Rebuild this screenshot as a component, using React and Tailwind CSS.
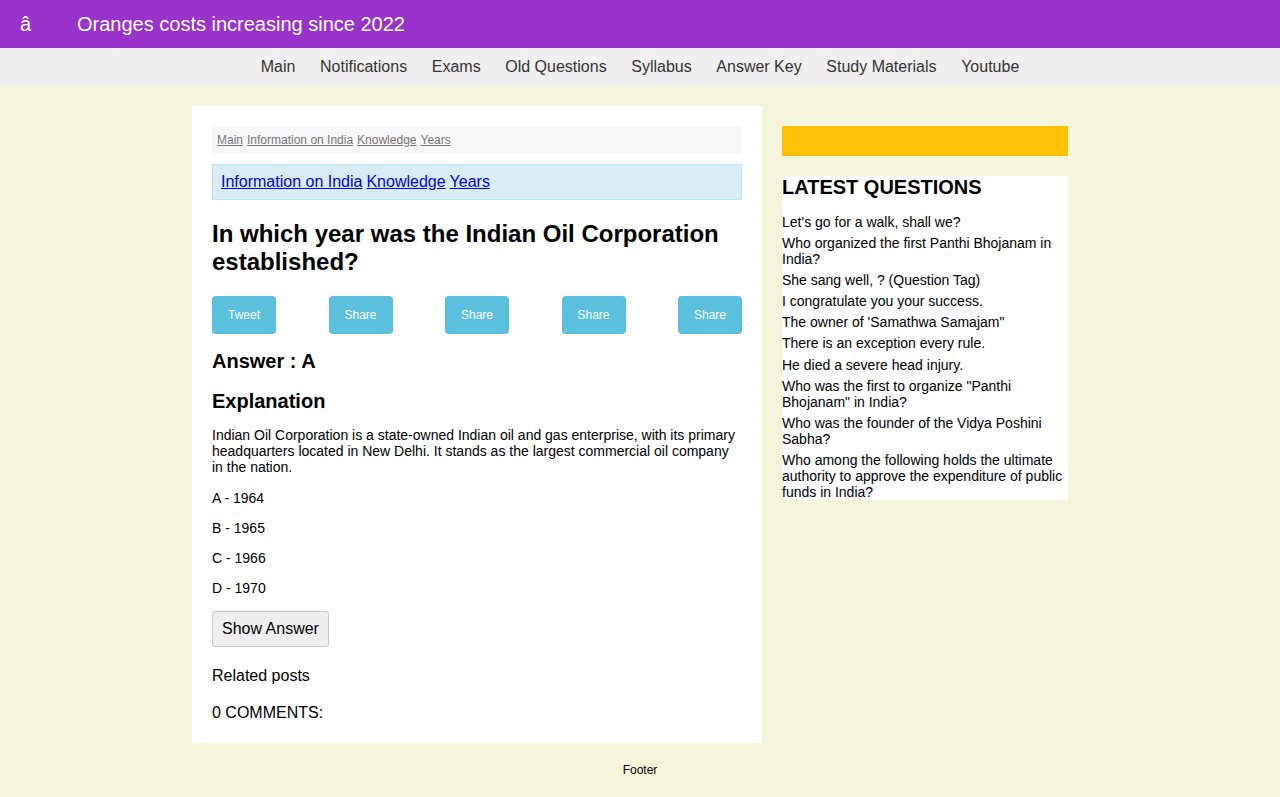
import React from "react";

const navItems = ["Main", "Notifications", "Exams", "Old Questions", "Syllabus", "Answer Key", "Study Materials", "Youtube"];
const latest = [
  "Let's go for a walk, shall we?",
  "Who organized the first Panthi Bhojanam in India?",
  "She sang well, ? (Question Tag)",
  "I congratulate you your success.",
  "The owner of 'Samathwa Samajam\"",
  "There is an exception every rule.",
  "He died a severe head injury.",
  "Who was the first to organize \"Panthi Bhojanam\" in India?",
  "Who was the founder of the Vidya Poshini Sabha?",
  "Who among the following holds the ultimate authority to approve the expenditure of public funds in India?",
];

export default function App() {
  return (
    <div className="min-h-[797px] bg-[#f5f5dc] text-black" style={{ fontFamily: '"Liberation Sans", Arial, sans-serif' }}>
      <header className="h-[48px] bg-[#9933cc] text-white flex items-center px-5">
        <span className="text-[20px] w-[57px]">â</span>
        <span className="text-[20px]">Oranges costs increasing since 2022</span>
      </header>
      <nav className="h-[38px] bg-[#f0f0f0] flex items-center justify-center">
        {navItems.map((n) => (
          <a key={n} className="px-[12.3px] text-[16px] text-[#333]">{n}</a>
        ))}
      </nav>
      <div className="w-[876px] ml-[192px] flex gap-[20px] pt-[20px] items-start">
        <main className="w-[570px] bg-white p-[20px] pb-[21px]">
          <div className="bg-[#f8f8f8] h-[28px] flex items-center px-[5px] gap-[4px] text-[12px] text-[#777]">
            <a className="underline">Main</a>
            <a className="underline">Information on India</a>
            <a className="underline">Knowledge</a>
            <a className="underline">Years</a>
          </div>
          <div className="mt-[10px] bg-[#d9edf7] border border-[#bce8f1] h-[36px] flex items-center px-[8px] gap-[4px] text-[16px] text-[#0000ee]">
            <a className="underline">Information on India</a>
            <a className="underline">Knowledge</a>
            <a className="underline">Years</a>
          </div>
          <h1 className="mt-[20px] text-[24px] leading-[28px] font-bold">In which year was the Indian Oil Corporation established?</h1>
          <div className="mt-[20px] flex justify-between">
            {["Tweet", "Share", "Share", "Share", "Share"].map((b, i) => (
              <button key={i} className="w-[64px] h-[38px] bg-[#5bc0de] text-white text-[12px] rounded-[4px]">{b}</button>
            ))}
          </div>
          <h2 className="mt-[15px] text-[20px] leading-[24px] font-bold">Answer : A</h2>
          <h2 className="mt-[16px] text-[20px] leading-[24px] font-bold">Explanation</h2>
          <p className="mt-[14px] text-[14px] leading-[16px]">Indian Oil Corporation is a state-owned Indian oil and gas enterprise, with its primary headquarters located in New Delhi. It stands as the largest commercial oil company in the nation.</p>
          <p className="mt-[15px] text-[14px] leading-[16px]">A - 1964</p>
          <p className="mt-[14px] text-[14px] leading-[16px]">B - 1965</p>
          <p className="mt-[14px] text-[14px] leading-[16px]">C - 1966</p>
          <p className="mt-[14px] text-[14px] leading-[16px]">D - 1970</p>
          <button className="mt-[15px] h-[36px] px-[9px] bg-[#efefef] border border-[#c8c8c8] rounded-[3px] text-[16px]">Show Answer</button>
          <p className="mt-[20px] text-[16px] leading-[18px]">Related posts</p>
          <p className="mt-[19px] text-[16px] leading-[18px]">0 COMMENTS:</p>
        </main>
        <aside className="w-[286px] pt-[20px]">
          <div className="h-[30px] bg-[#ffc107]"></div>
          <div className="mt-[20px] bg-white">
            <h3 className="text-[20px] leading-[22px] font-bold">LATEST QUESTIONS</h3>
            <ul className="mt-[16px]">
              {latest.map((q, i) => (
                <li key={i} className="text-[14px] leading-[16px] mb-[5.1px] last:mb-0">{q}</li>
              ))}
            </ul>
          </div>
        </aside>
      </div>
      <footer className="text-center text-[12px] pt-[18px] pb-[20px]">Footer</footer>
    </div>
  );
}
